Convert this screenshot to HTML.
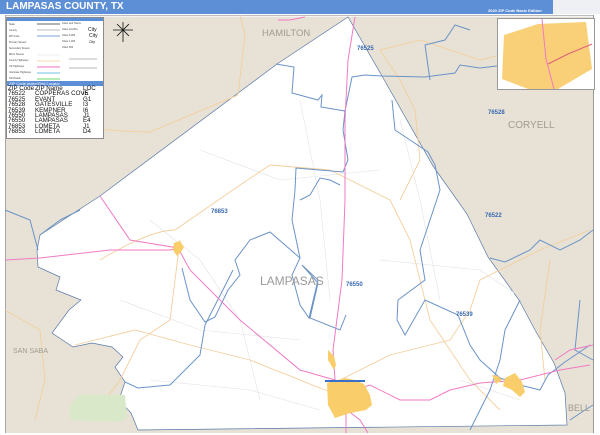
<!DOCTYPE html>
<html><head><meta charset="utf-8"><style>
html,body{margin:0;padding:0;width:600px;height:435px;overflow:hidden;background:#fff;font-family:"Liberation Sans",Arial,sans-serif}
#title{position:absolute;left:0;top:0;width:600px;height:14px;background:#5d8fd6}
#title span{position:absolute;left:6px;top:1px;color:#fff;font-weight:bold;font-size:10px}
#ed{position:absolute;left:488px;top:8px;color:#fff;font-size:4px;font-weight:bold}
#logo{position:absolute;left:553px;top:0;width:47px;height:14px;background:#eef0f4}
#legend{position:absolute;left:6px;top:17px;width:96px;height:120px;background:#fff;border:1px solid #8b8b8b;font-size:6.2px;color:#111}
#legend .lt{background:#5d8fd6;height:3px}
#legend .zh{position:absolute;top:63px;left:0;width:96px;height:5px;background:#5d8fd6;color:#fff;font-size:4px;line-height:5px;padding-left:2px;box-sizing:border-box}
.r{position:absolute;left:1px;height:6px;line-height:6px;white-space:nowrap}
.r b{font-weight:normal;position:absolute;top:0}
#inset{position:absolute;left:497px;top:18px;width:96px;height:70px;background:#fff;border:1px solid #999}
</style></head><body>
<svg width="600" height="435" style="position:absolute;left:0;top:0">
<rect x="5" y="15" width="589" height="418" fill="#e7e2d5"/>
<rect x="5" y="15" width="589" height="2" fill="#f4f4f4"/>
<line x1="5" y1="15.5" x2="594" y2="15.5" stroke="#aaa" stroke-width="0.7"/>
<line x1="5.5" y1="15" x2="5.5" y2="433" stroke="#999" stroke-width="0.8"/>
<line x1="593.5" y1="15" x2="593.5" y2="433" stroke="#999" stroke-width="1"/>
<polygon fill="#fff" stroke="#5878a8" stroke-width="0.7" points="348,17 382,76 433,166 467,214 488,257 519,300 535,330 554,363 565,393 567,425 138,430 131,413 119,400 125,382 115,367 123,357 112,347 92,343 73,347 52,333 69,310 81,300 56,290 60,277 38,267 37,250 40,235 100,196 277,64"/>
<g stroke="#e2e2e2" stroke-width="0.6" fill="none">
<path d="M150,220 L200,260 L240,320 L260,400"/><path d="M300,100 L320,200 L330,300"/><path d="M400,120 L420,200 L440,300"/><path d="M120,300 L200,330 L300,340"/><path d="M380,260 L480,270 L540,310"/><path d="M200,150 L280,180 L380,170"/><path d="M150,380 L250,390 L320,410"/><path d="M460,380 L520,400"/>
</g>
<g stroke="#f3cf9e" stroke-width="0.9" fill="none">
<path d="M5,110 Q60,130 150,132 L238,95 L245,35 L240,15"/>
<path d="M100,260 Q150,230 175,230 L240,185 L270,165 L330,170 L350,180"/>
<path d="M180,240 L170,320 L140,340 L120,380 L90,420"/>
<path d="M75,345 L135,330 L190,345 L250,360 L330,392"/>
<path d="M340,380 L390,355 L450,340 L470,310 L480,280 L540,250 L590,230"/>
<path d="M350,180 L390,200 L410,240 L430,320 L470,380 L500,410"/>
<path d="M400,200 L420,160 L415,110 L400,80 L380,50 L420,40 L480,60 L520,50 L590,30"/>
<path d="M5,310 L40,330 L45,380 L35,420"/>
<path d="M550,260 L540,330 L545,380"/>
</g>
<g stroke="#6b93c8" stroke-width="1" fill="none">
<path d="M276,64 L294,67 L292,93 L318,100 L322,95 L321,107 L345,111 L352,77 L365,75 L382,76 L425,77 L440,75 L455,73 L460,65 L480,68 L505,65 L520,60"/>
<path d="M345,111 L343,130 L348,160 L343,172 L296,168 L295,190 L292,220 L300,258 L292,275 L300,305 L309,318 L318,280 L302,265 L318,283 L310,318 L340,330 L346,315"/>
<path d="M300,200 L310,195 L320,178 L330,180 L340,185"/>
<path d="M392,100 L395,130 L428,152 L435,165 L440,190 L420,250 L425,280 L398,300 L397,320 L405,335 L425,300 L458,315 L470,345 L480,360 L500,378 L520,385 L540,390 L548,375 L565,362 L590,345"/>
<path d="M182,268 L190,300 L205,322 L215,317 L228,290 L240,275 L235,260 L250,240 L270,232 L300,258"/>
<path d="M40,235 L60,220 L80,210"/>
<path d="M233,270 L205,325 L200,355 L170,385 L138,388 L125,382"/>
<path d="M430,80 L425,45 L445,40 L455,25 L470,30"/>
<path d="M490,258 L505,262 L530,250 L540,240 L560,250 L580,240 L593,230"/>
<path d="M520,300 L505,330 L500,360 L490,390 L480,410 L470,430"/>
<path d="M570,420 L585,410 L593,405"/><path d="M580,300 L575,350 L593,360"/>
<path d="M5,210 L30,220 L38,250"/>
</g>
<g stroke="#f07ac4" stroke-width="1" fill="none">
<path d="M5,260 L40,258 L110,250 L170,250 L178,248"/>
<path d="M100,196 L130,240 L178,248 L190,270 L240,320 L300,370 L335,380"/>
<path d="M355,17 L348,60 L345,120 L345,200 L342,280 L333,350 L335,380 L340,400 L346,410 L346,433"/>
<path d="M347,410 L360,420 L368,433"/>
<path d="M305,17 L290,20 L278,20"/>
<path d="M345,393 L370,385 L400,400 L430,400 L450,390 L480,383 L520,380 L560,370 L590,365"/>
<path d="M555,360 L570,350 L593,345"/>
</g>
<g fill="#f8cd6a">
<polygon points="174,243 180,241 184,247 181,252 177,256 173,250"/>
<polygon points="328,350 334,356 336,365 334,370 328,360"/>
<polygon points="327,383 345,378 355,380 364,384 370,395 372,405 366,410 350,413 335,418 328,405"/>
<polygon points="492,375 498,376 502,380 496,384"/>
<polygon points="505,378 515,373 522,382 525,392 520,397 512,390 503,386"/>
</g>
<rect x="325" y="380" width="40" height="2" fill="#3a6fc9"/>
<polygon points="80,395 125,395 127,418 118,422 70,420 70,405" fill="#d9e8c9"/>
<g font-family="Liberation Sans,Arial,sans-serif">
<text x="262" y="36" font-size="9.5" fill="#a09a90">HAMILTON</text>
<text x="508" y="128" font-size="10" fill="#a09a90">CORYELL</text>
<text x="13" y="353" font-size="7" fill="#a09a90">SAN SABA</text>
<text x="568" y="411" font-size="9" fill="#a09a90">BELL</text>
<text x="260" y="285" font-size="12" fill="#9a9a9a">LAMPASAS</text>
<g font-size="6" fill="#3a68b0" font-weight="bold">
<text x="357" y="50">76525</text><text x="488" y="114">76528</text><text x="485" y="217">76522</text>
<text x="211" y="213">76853</text><text x="346" y="286">76550</text><text x="456" y="316">76539</text>
</g>
</g>
<g stroke="#111" stroke-width="0.8"><line x1="123" y1="22" x2="123" y2="42"/><line x1="113" y1="30" x2="133" y2="30"/><line x1="117" y1="24" x2="129" y2="36"/><line x1="129" y1="24" x2="117" y2="36"/></g>
</svg>
<div id="title"><span>LAMPASAS COUNTY, TX</span><div id="ed">2020 ZIP Code Basic Edition</div><div id="logo"></div></div>
<div id="legend"><div class="lt"></div>
<svg width="96" height="60" style="position:absolute;top:3px;left:0">
<g stroke-width="1"><line x1="30" y1="3" x2="53" y2="3" stroke="#666"/><line x1="30" y1="9" x2="53" y2="9" stroke="#bbb"/><line x1="30" y1="15" x2="53" y2="15" stroke="#a9c4e8" stroke-width="1.5"/><line x1="30" y1="34" x2="53" y2="34" stroke="#eee"/><line x1="30" y1="40" x2="53" y2="40" stroke="#f7dab0"/><line x1="30" y1="46" x2="53" y2="46" stroke="#f6a0d8" stroke-width="1.5"/><line x1="30" y1="52" x2="53" y2="52" stroke="#9fd5ef" stroke-width="1.5"/><line x1="30" y1="58" x2="53" y2="58" stroke="#9ee69e" stroke-width="1.5"/><line x1="62" y1="38" x2="90" y2="38" stroke="#777" stroke-width="0.5"/><line x1="62" y1="47" x2="90" y2="47" stroke="#777" stroke-width="0.5"/></g>
<g font-size="2.5" fill="#444"><text x="2" y="4">State</text><text x="2" y="10">County</text><text x="2" y="16">ZIP Code</text><text x="2" y="22">Primary Streets</text><text x="2" y="28">Secondary Streets</text><text x="2" y="34">Minor Streets</text><text x="2" y="40">County Highways</text><text x="2" y="46">US Highways</text><text x="2" y="52">Interstate Highways</text><text x="2" y="58">Toll Roads</text><text x="55" y="3">Cities and Towns</text><text x="55" y="9">Cities 10,000+</text><text x="55" y="15">Cities 5,000</text><text x="55" y="21">Cities 1,000</text><text x="55" y="27">Cities 500</text></g>
<g font-size="5" fill="#111"><text x="81" y="10">City</text><text x="82" y="16">City</text><text x="82" y="22" font-size="3.5">City</text></g>
</svg>
<div class="zh">ZIP Code Index/Grid Locator</div>
<div class="r" style="top:68px"><b style="left:0">ZIP Code</b><b style="left:27px">ZIP Name</b><b style="left:75px">LOC</b></div>
<div class="r" style="top:73.4px"><b style="left:0">76522</b><b style="left:27px">COPPERAS COVE</b><b style="left:75px">I5</b></div>
<div class="r" style="top:78.8px"><b style="left:0">76525</b><b style="left:27px">EVANT</b><b style="left:75px">G1</b></div>
<div class="r" style="top:84.2px"><b style="left:0">76528</b><b style="left:27px">GATESVILLE</b><b style="left:75px">I3</b></div>
<div class="r" style="top:89.6px"><b style="left:0">76539</b><b style="left:27px">KEMPNER</b><b style="left:75px">I6</b></div>
<div class="r" style="top:95px"><b style="left:0">76550</b><b style="left:27px">LAMPASAS</b><b style="left:75px">J1</b></div>
<div class="r" style="top:100.4px"><b style="left:0">76550</b><b style="left:27px">LAMPASAS</b><b style="left:75px">E4</b></div>
<div class="r" style="top:105.8px"><b style="left:0">76853</b><b style="left:27px">LOMETA</b><b style="left:75px">J1</b></div>
<div class="r" style="top:111.2px"><b style="left:0">76853</b><b style="left:27px">LOMETA</b><b style="left:75px">D4</b></div>
</div>
<div id="inset"><svg width="96" height="70">
<polygon points="6,16 40,5 88,3 94,50 60,70 30,70 4,60" fill="#f9d078"/>
<path d="M44,0 L48,40 L56,70" stroke="#f07ac4" fill="none" stroke-width="1"/>
<path d="M50,45 L70,35 L94,25" stroke="#e0607a" fill="none" stroke-width="1"/>
</svg></div>
</body></html>
